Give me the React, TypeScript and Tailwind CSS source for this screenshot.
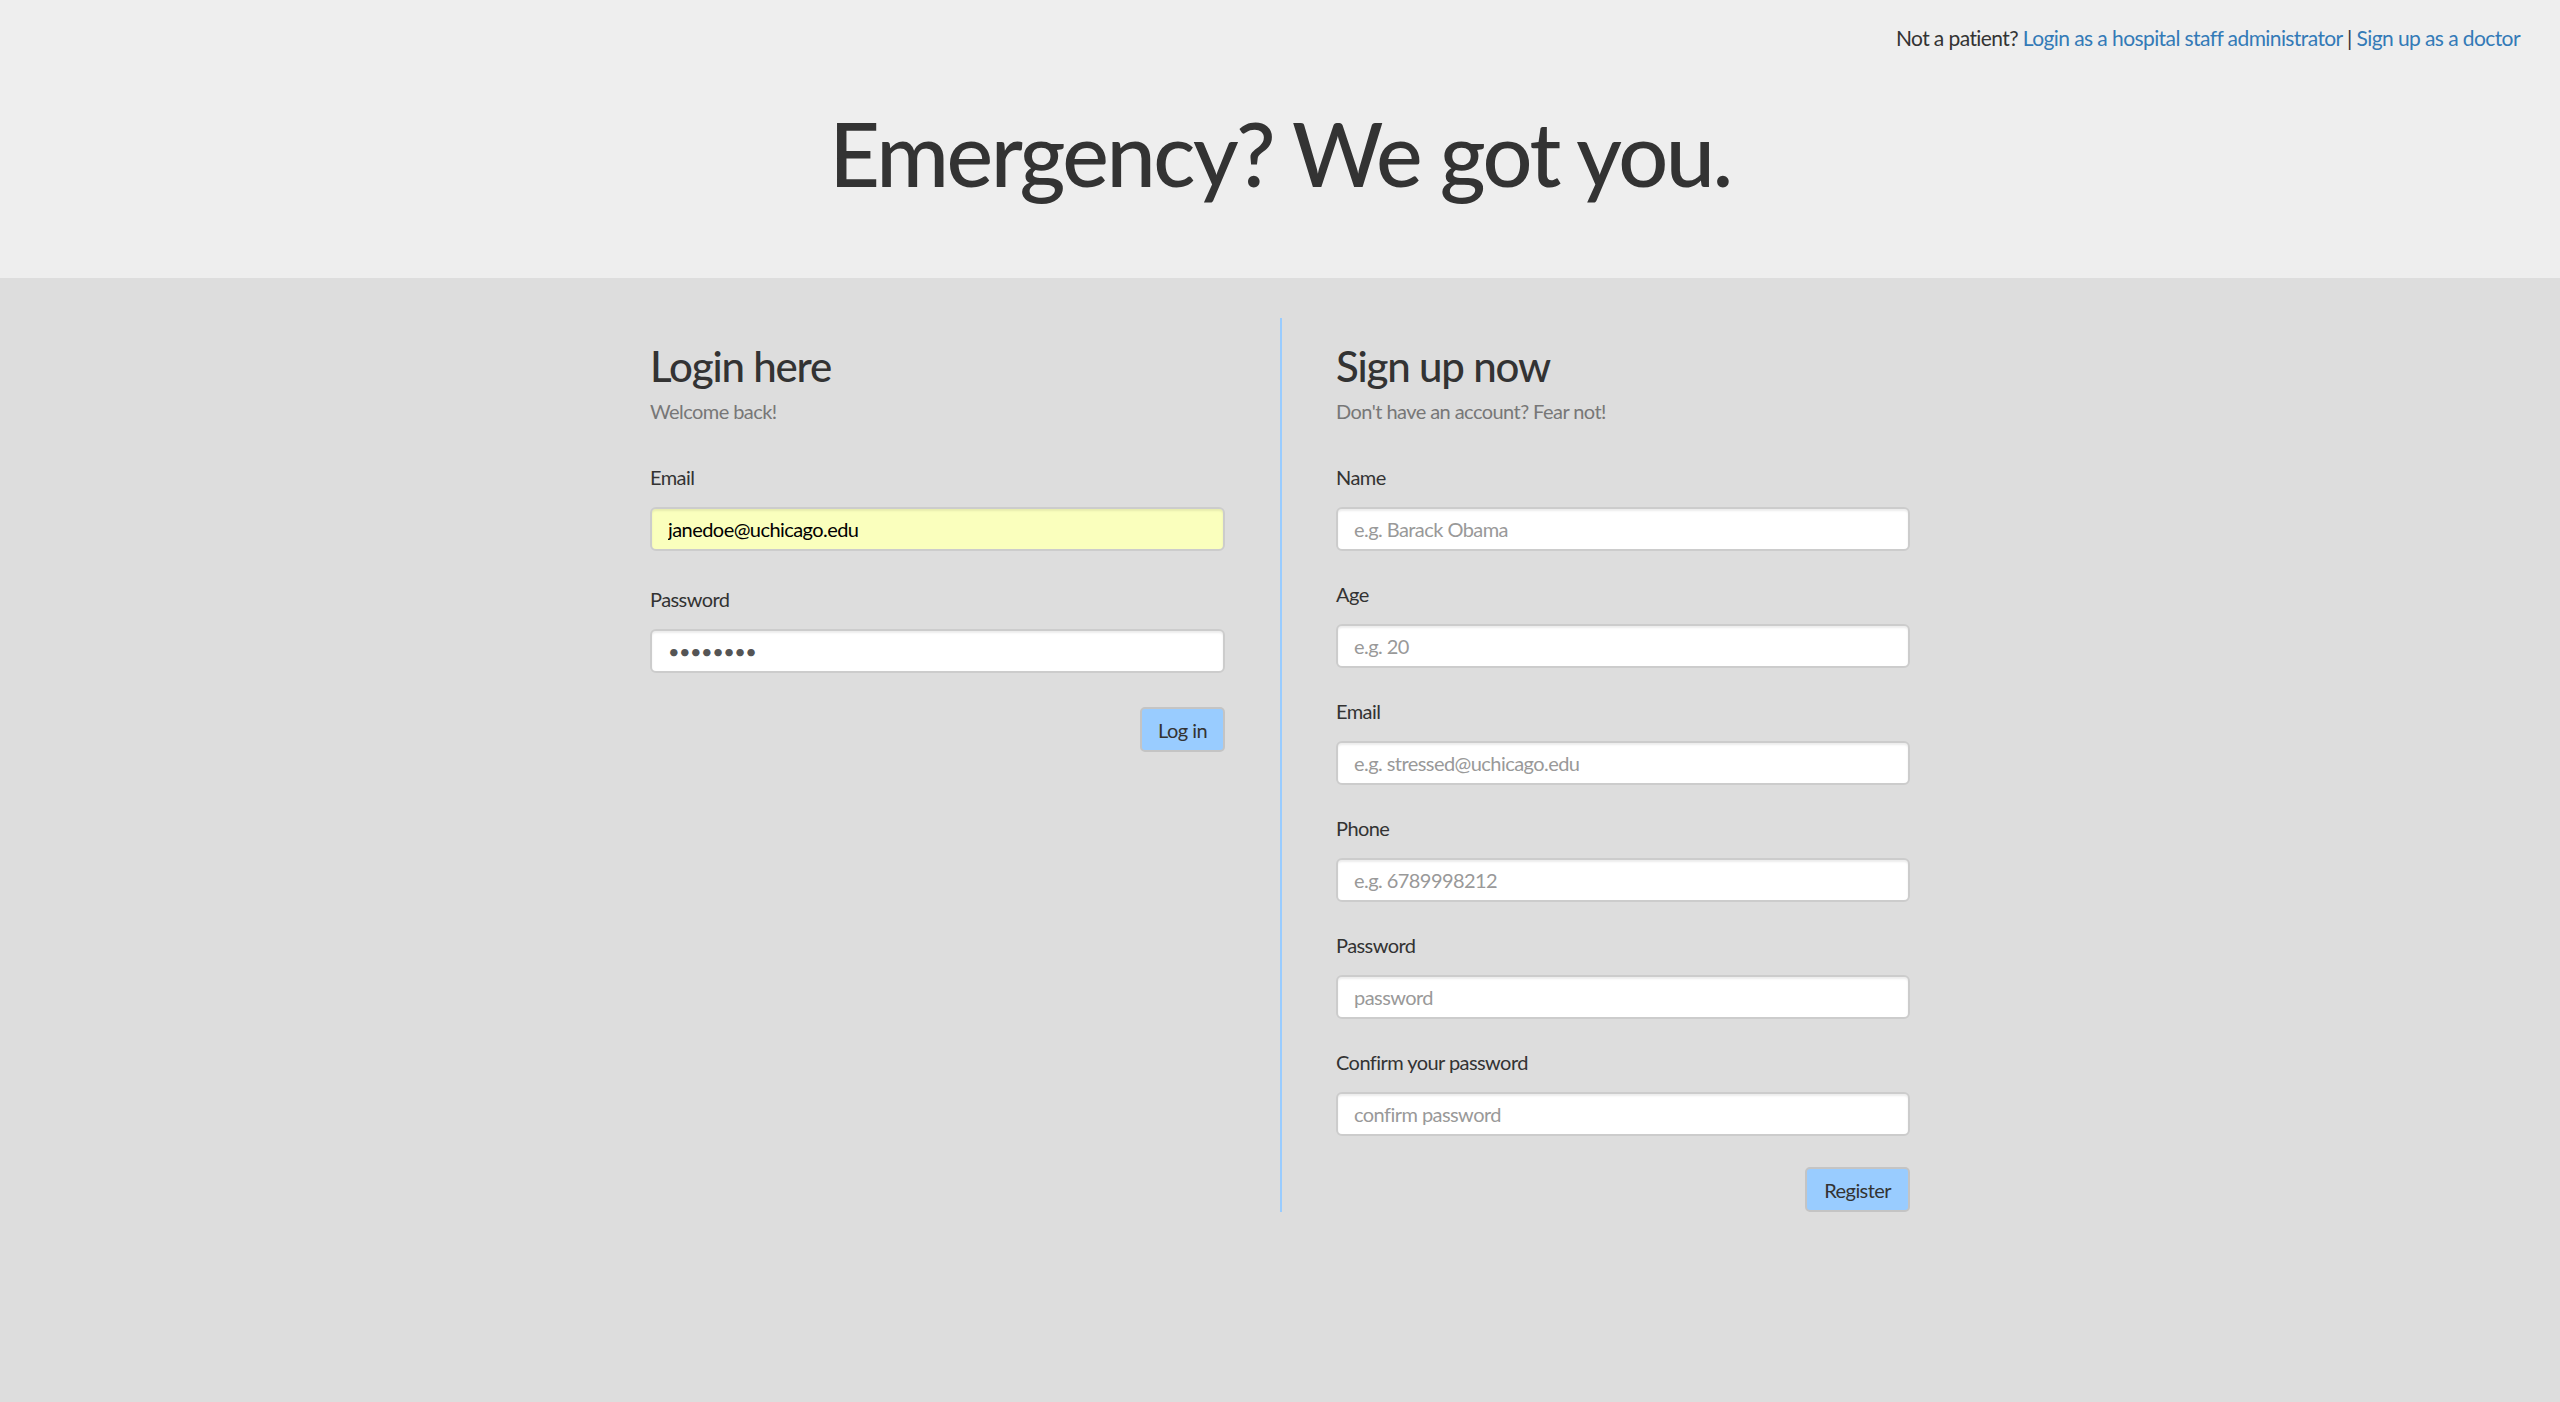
import React from 'react';

const font = { fontFamily: 'Lato, "Open Sans", sans-serif' };

function Field({
  label,
  placeholder,
  type = 'text',
  value,
  yellow = false,
  gapTop = 'mt-[29px]',
}: {
  label: string;
  placeholder?: string;
  type?: string;
  value?: string;
  yellow?: boolean;
  gapTop?: string;
}) {
  return (
    <div className={gapTop}>
      <label className="block text-[20px] leading-[28px] tracking-[-0.028em] text-[#333333]">{label}</label>
      <input
        type={type}
        placeholder={placeholder}
        defaultValue={value}
        readOnly
        className={`mt-[16px] block h-[44px] w-full rounded-[6px] border-2 border-[#cccccc] px-[16px] text-[20px] tracking-[-0.028em] outline-none shadow-[inset_0_2px_2px_rgba(0,0,0,0.075)] placeholder:text-[#999999] ${
          yellow ? 'bg-[#faffbd] text-black' : 'bg-white text-[#555555]'
        }`}
        style={font}
      />
    </div>
  );
}

export default function App() {
  return (
    <div className="min-h-[1402px] bg-[#dddddd] text-[#333333]" style={font}>
      {/* Header */}
      <header className="h-[278px] bg-[#eeeeee]">
        <div className="flex justify-end pr-[40px] pt-[23px]">
          <span className="text-[21px] leading-[30px] tracking-[-0.028em]">
            Not a patient?{' '}
            <a href="#" className="text-[#337ab7]">
              Login as a hospital staff administrator
            </a>{' '}
            |{' '}
            <a href="#" className="text-[#337ab7]">
              Sign up as a doctor
            </a>
          </span>
        </div>
        <h1 className="mt-[56px] text-center text-[88px] font-medium leading-[88px] tracking-[-0.028em] text-[#333333]">
          Emergency? We got you.
        </h1>
      </header>

      {/* Main */}
      <main className="pt-[40px]">
        <div className="mx-auto grid w-[1260px] grid-cols-2 items-start">
          {/* Login */}
          <div className="pr-[55px] pt-[25px]">
            <h2 className="text-[42px] leading-[46px] font-medium tracking-[-0.028em]">Login here</h2>
            <p className="mt-[8px] text-[20px] leading-[28px] tracking-[-0.028em] text-[#777777]">Welcome back!</p>
            <Field label="Email" value="janedoe@uchicago.edu" yellow gapTop="mt-[38px]" />
            <Field label="Password" type="password" value="12345678" gapTop="mt-[34px]" />
            <div className="mt-[34px] flex justify-end">
              <button className="h-[45px] rounded-[5px] border-2 border-[#c4c4c4] bg-[#99ccff] px-[16px] text-[20px] tracking-[-0.028em] text-[#333333]">
                Log in
              </button>
            </div>
          </div>

          {/* Sign up */}
          <div className="border-l-2 border-[#99ccff] pl-[54px] pt-[25px]">
            <h2 className="text-[42px] leading-[46px] font-medium tracking-[-0.028em]">Sign up now</h2>
            <p className="mt-[8px] text-[20px] leading-[28px] tracking-[-0.028em] text-[#777777]">
              Don't have an account? Fear not!
            </p>
            <Field label="Name" placeholder="e.g. Barack Obama" gapTop="mt-[38px]" />
            <Field label="Age" placeholder="e.g. 20" />
            <Field label="Email" placeholder="e.g. stressed@uchicago.edu" />
            <Field label="Phone" placeholder="e.g. 6789998212" />
            <Field label="Password" type="password" placeholder="password" />
            <Field label="Confirm your password" type="password" placeholder="confirm password" />
            <div className="mt-[31px] flex justify-end">
              <button className="h-[45px] rounded-[5px] border-2 border-[#c4c4c4] bg-[#99ccff] px-[17px] text-[20px] tracking-[-0.028em] text-[#333333]">
                Register
              </button>
            </div>
          </div>
        </div>
      </main>
    </div>
  );
}
